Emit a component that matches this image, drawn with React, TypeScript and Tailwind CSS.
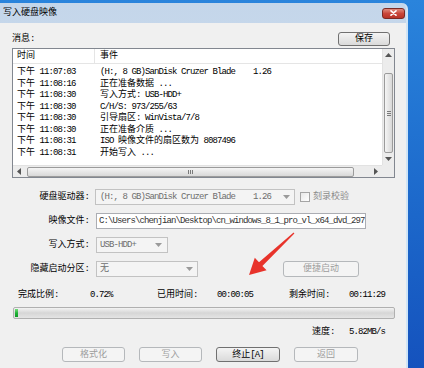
import React from 'react'

const mono = "font-['Liberation_Mono','Noto_Sans_CJK_SC',monospace]"

// CJK runs keep their width, latin runs are squeezed to half-width like SimSun
function Mix({ text }: { text: string }) {
  const parts = text.split(/([\u3000-\u9fff\uff00-\uffef]+)/)
  return (
    <>
      {parts.map((p, i) =>
        i % 2 === 1 ? (
          <span key={i}>{p}</span>
        ) : p ? (
          <span key={i} className="tracking-[-0.9px]">
            {p}
          </span>
        ) : null
      )}
    </>
  )
}

function Arrow({ dir, color = '#333' }: { dir: 'up' | 'down' | 'left' | 'right'; color?: string }) {
  const pts = {
    up: '0,4 3.5,0 7,4',
    down: '0,0 3.5,4 7,0',
    left: '4,0 0,3.5 4,7',
    right: '0,0 4,3.5 0,7',
  }[dir]
  const vertical = dir === 'up' || dir === 'down'
  return (
    <svg width={vertical ? 7 : 4} height={vertical ? 4 : 7} viewBox={vertical ? '0 0 7 4' : '0 0 4 7'}>
      <polygon points={pts} fill={color} />
    </svg>
  )
}

function Btn({ label, disabled, className }: { label: string; disabled?: boolean; className: string }) {
  return (
    <div
      className={`${className} flex items-center justify-center rounded-[3px] border ${
        disabled
          ? 'border-[#b5b8bb] bg-[#f4f4f4] text-[#9d9d9d]'
          : 'border-[#707070] bg-gradient-to-b from-[#f4f4f4] to-[#dadada] text-black'
      }`}
    >
      <Mix text={label} />
    </div>
  )
}

const logs: [string, string][] = [
  ['下午 11:07:03', '(H:, 8 GB)SanDisk Cruzer Blade    1.26'],
  ['下午 11:08:16', '正在准备数据 ...'],
  ['下午 11:08:30', '写入方式: USB-HDD+'],
  ['下午 11:08:30', 'C/H/S: 973/255/63'],
  ['下午 11:08:30', '引导扇区: WinVista/7/8'],
  ['下午 11:08:30', '正在准备介质 ...'],
  ['下午 11:08:31', 'ISO 映像文件的扇区数为 8087496'],
  ['下午 11:08:31', '开始写入 ...'],
]

export default function App() {
  return (
    <div className={`relative w-[424px] h-[368px] overflow-hidden bg-gradient-to-b from-[#2a84dc] to-[#1552bd] pt-[3px] ${mono}`}>
      {/* window */}
      <div className="w-[408px] h-[365px] flex flex-col rounded-tr-[6px] bg-gradient-to-b from-[#c4d6ea] to-[#d8e4f1] border-r-2 border-[#cfe4f6]">
        {/* title bar */}
        <div className="h-[20px] flex items-center justify-between pl-[3px] pr-[1px]">
          <span className="text-[9px] leading-[12px] text-black">写入硬盘映像</span>
          <div className="w-[23px] h-[11px] rounded-[3px] border border-[#7b2a24] bg-gradient-to-b from-[#e08a7c] via-[#c9463a] to-[#b83326] flex items-center justify-center">
            <svg width="7" height="6" viewBox="0 0 7 6">
              <path d="M1 0.8 L6 5.2 M6 0.8 L1 5.2" stroke="#fff" strokeWidth="1.6" strokeLinecap="round" />
            </svg>
          </div>
        </div>

        {/* client area */}
        <div className="flex-1 bg-[#f0f0f0] flex flex-col text-[9px] leading-[12px] text-black">
          {/* message header */}
          <div className="mt-[9px] h-[14px] flex items-center justify-between pl-[12px] pr-[16px]">
            <span>消息:</span>
            <Btn label="保存" className="w-[52px] h-[14px]" />
          </div>

          {/* log list */}
          <div className="mt-[2px] ml-[12px] w-[383px] h-[130px] border border-[#828790] bg-white grid grid-cols-[1fr_12px] grid-rows-[1fr_12px]">
            <div className="flex flex-col overflow-hidden">
              <div className="h-[15px] flex shrink-0 border-b border-[#e5e5e5]">
                <div className="w-[82px] pl-[4px] flex items-center border-r border-[#e5e5e5]">时间</div>
                <div className="pl-[5px] flex items-center">事件</div>
              </div>
              <div className="pt-[3px] flex flex-col">
                {logs.map(([t, e], i) => (
                  <div key={i} className="h-[11.5px] leading-[11.5px] flex whitespace-pre">
                    <div className="w-[82px] pl-[4px]">
                      <Mix text={t} />
                    </div>
                    <div className="pl-[5px]">
                      <Mix text={e} />
                    </div>
                  </div>
                ))}
              </div>
            </div>
            {/* vertical scrollbar */}
            <div className="bg-[#ececec] border-l border-[#e2e2e2] flex flex-col">
              <div className="h-[12px] flex items-center justify-center">
                <Arrow dir="up" color="#555" />
              </div>
              <div className="flex-1 flex flex-col justify-end">
                <div className="h-[80px] mx-[1px] rounded-[2px] border border-[#9b9b9b] bg-gradient-to-r from-[#f5f5f5] to-[#d8d8d8] flex flex-col items-center justify-center gap-[1px]">
                  <div className="w-[4px] h-px bg-[#7a7a7a]" />
                  <div className="w-[4px] h-px bg-[#7a7a7a]" />
                  <div className="w-[4px] h-px bg-[#7a7a7a]" />
                </div>
              </div>
              <div className="h-[12px] flex items-center justify-center">
                <Arrow dir="down" color="#555" />
              </div>
            </div>
            {/* horizontal scrollbar */}
            <div className="bg-[#ececec] border-t border-[#e2e2e2] flex items-center">
              <div className="w-[12px] h-full flex items-center justify-center">
                <Arrow dir="left" color="#555" />
              </div>
              <div className="ml-[2px] w-[327px] h-[10px] rounded-[2px] border border-[#9b9b9b] bg-gradient-to-b from-[#f5f5f5] to-[#d8d8d8] flex items-center justify-center gap-[1px]">
                <div className="w-px h-[4px] bg-[#7a7a7a]" />
                <div className="w-px h-[4px] bg-[#7a7a7a]" />
                <div className="w-px h-[4px] bg-[#7a7a7a]" />
              </div>
              <div className="flex-1 h-full flex items-center justify-end pr-[4px]">
                <Arrow dir="right" color="#555" />
              </div>
            </div>
            <div className="bg-[#ececec]" />
          </div>

          {/* form */}
          <div className="mt-[11px] flex flex-col gap-[8px]">
            <div className="h-[16px] flex items-center">
              <div className="w-[92px] text-right pr-[2px]">硬盘驱动器:</div>
              <div className="ml-[3px] w-[200px] h-[16px] border border-[#c2c2c2] bg-[#f4f4f4] text-[#6e6e6e] flex items-center justify-between pl-[4px] pr-[4px] whitespace-pre">
                <span>
                  <Mix text="(H:, 8 GB)SanDisk Cruzer Blade    1.26" />
                </span>
                <Arrow dir="down" color="#9a9a9a" />
              </div>
              <div className="ml-[5px] w-[10px] h-[10px] border border-[#a5a5a5] bg-gradient-to-br from-[#e8e8e8] to-white" />
              <span className="ml-[3px] text-[#8a8a8a]">刻录校验</span>
            </div>
            <div className="h-[16px] flex items-center">
              <div className="w-[92px] text-right pr-[2px]">映像文件:</div>
              <div className="ml-[4px] w-[270px] h-[16px] border border-[#abadb3] bg-white text-[#333] flex items-center pl-[2px] whitespace-pre overflow-hidden">
                <Mix text="C:\Users\chenjian\Desktop\cn_windows_8_1_pro_vl_x64_dvd_297" />
              </div>
            </div>
            <div className="h-[16px] flex items-center">
              <div className="w-[92px] text-right pr-[2px]">写入方式:</div>
              <div className="ml-[4px] w-[72px] h-[16px] border border-[#c2c2c2] bg-[#f4f4f4] text-[#6e6e6e] flex items-center justify-between pl-[3px] pr-[5px]">
                <span>
                  <Mix text="USB-HDD+" />
                </span>
                <Arrow dir="down" color="#9a9a9a" />
              </div>
            </div>
            <div className="h-[16px] flex items-center">
              <div className="w-[92px] text-right pr-[2px]">隐藏启动分区:</div>
              <div className="ml-[4px] w-[102px] h-[16px] border border-[#c2c2c2] bg-[#f4f4f4] text-[#6e6e6e] flex items-center justify-between pl-[3px] pr-[4px]">
                <span>无</span>
                <Arrow dir="down" color="#9a9a9a" />
              </div>
              <Btn label="便捷启动" disabled className="ml-[85px] w-[76px] h-[16px]" />
            </div>
          </div>

          {/* progress info */}
          <div className="mt-[12px] h-[12px] flex items-center pl-[18px]">
            <span className="w-[72px]">完成比例:</span>
            <span className="w-[67px]">
              <Mix text="0.72%" />
            </span>
            <span className="w-[60px]">已用时间:</span>
            <span className="w-[72px]">
              <Mix text="00:00:05" />
            </span>
            <span className="w-[60px]">剩余时间:</span>
            <span>
              <Mix text="00:11:29" />
            </span>
          </div>

          {/* progress bar */}
          <div className="mt-[6px] ml-[13px] w-[382px] h-[12px] rounded-[2px] border border-[#b0b0b0] bg-gradient-to-b from-[#f3f3f3] via-[#d6d6d6] to-[#e4e4e4] flex p-px">
            <div className="w-[3px] h-full bg-gradient-to-b from-[#6fe07a] via-[#1fb238] to-[#0e9a25]" />
          </div>

          {/* speed */}
          <div className="mt-[7px] h-[12px] flex items-center pl-[312px]">
            <span className="w-[37px]">速度:</span>
            <span>
              <Mix text="5.82MB/s" />
            </span>
          </div>

          {/* action buttons */}
          <div className="mt-[9px] h-[15px] flex pl-[62px] gap-[14px]">
            <Btn label="格式化" disabled className="w-[63px] h-[15px]" />
            <Btn label="写入" disabled className="w-[63px] h-[15px]" />
            <Btn label="终止[A]" className="w-[64px] h-[15px]" />
            <Btn label="返回" disabled className="w-[64px] h-[15px]" />
          </div>
        </div>
      </div>

      {/* red annotation arrow */}
      <svg className="absolute left-0 top-0 pointer-events-none" width="424" height="368" viewBox="0 0 424 368">
        <polygon
          points="293.6,232.4 259.0,262.3 254.8,257.8 249,275 266.6,270.3 262.4,265.9 294.4,233.6"
          fill="#e8332b"
        />
      </svg>
    </div>
  )
}
